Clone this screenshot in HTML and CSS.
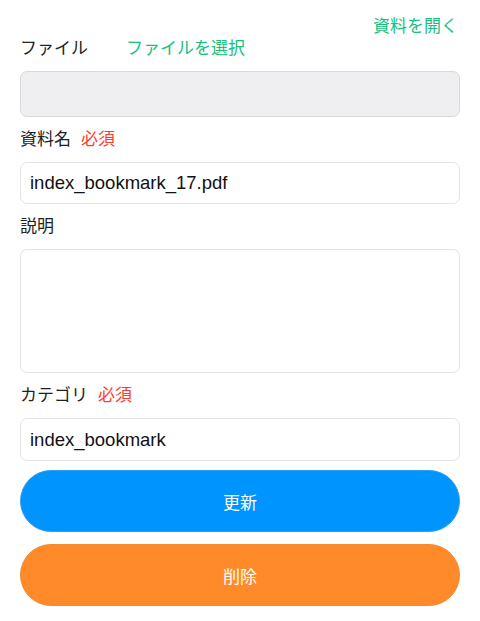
FILE: index.html
```html
<!DOCTYPE html>
<html>
<head>
    <meta charset="utf-8" />
    <title>資料の編集</title>
    <link rel="stylesheet" href="styles.css">
</head>
<body>
    <div id="form">
        <div class="open-row"><a class="link" href="#">資料を開く</a></div>

        <div class="label-row">
            <span class="label">ファイル</span>
            <a class="link choose" href="#">ファイルを選択</a>
        </div>
        <div class="field file-box"></div>

        <div class="label-row">
            <span class="label">資料名</span>
            <span class="required">必須</span>
        </div>
        <input class="field text" type="text" value="index_bookmark_17.pdf" />

        <div class="label-row">
            <span class="label">説明</span>
        </div>
        <textarea class="field memo"></textarea>

        <div class="label-row">
            <span class="label">カテゴリ</span>
            <span class="required">必須</span>
        </div>
        <input class="field text last" type="text" value="index_bookmark" />

        <button class="btn update" type="button">更新</button>
        <button class="btn delete" type="button">削除</button>
    </div>
</body>
</html>
```

FILE: styles.css
```css
html, body {
    margin: 0;
    padding: 0;
    background: #fff;
}

body {
    font-family: "Noto Sans CJK JP", "Noto Sans", sans-serif;
    font-size: 17px;
    color: #222;
}

#form {
    padding: 14px 20px 0;
}

.open-row {
    text-align: right;
    line-height: 21px;
    padding-right: 2px;
}

.link {
    color: #16bf7a;
    text-decoration: none;
}

.label-row {
    display: flex;
    align-items: center;
    height: 24px;
    line-height: 24px;
    margin-bottom: 12px;
}

    .label-row .choose {
        margin-left: 38px;
    }

    .label-row .required {
        color: #ff3b30;
        margin-left: 10px;
    }

.field {
    display: block;
    box-sizing: border-box;
    width: 100%;
    margin: 0 0 9px;
    border: 1px solid #e4e4e6;
    border-radius: 7px;
    background: #fff;
}

.file-box {
    height: 46px;
    background: #efeff1;
    border-color: #d9d9db;
}

.text {
    height: 42px;
    padding: 0 9px;
    font-family: "Liberation Sans", Arial, sans-serif;
    font-size: 18.5px;
    color: #111;
    outline: none;
}

    .text.last {
        height: 43px;
    }

.memo {
    height: 124px;
    resize: none;
    outline: none;
}

.btn {
    display: block;
    width: 100%;
    height: 62px;
    margin: 0 0 12px;
    border: 1px solid transparent;
    border-radius: 31px;
    font-family: "Noto Sans CJK JP", "Noto Sans", sans-serif;
    font-size: 17px;
    color: #fff;
    cursor: pointer;
}

    .btn.update {
        background: #0094ff;
        border-color: #2a9ff5;
    }

    .btn.delete {
        background: #ff8a2a;
        border-color: #f58a2e;
    }
```
